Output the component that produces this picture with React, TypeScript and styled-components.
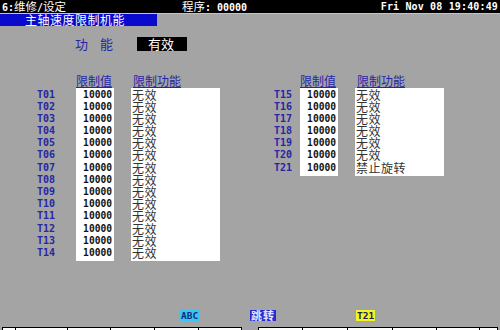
import React from "react";
import styled, { createGlobalStyle } from "styled-components";

const Global = createGlobalStyle`
  html, body { margin: 0; padding: 0; background: #a4a4a4; }
  * { box-sizing: border-box; }
`;

const MONO = `"DejaVu Sans Mono", "Liberation Mono", "Noto Sans CJK SC", monospace`;
const CJK = `"Noto Sans CJK SC", "DejaVu Sans", sans-serif`;
const BLUE_TEXT = "#2626a6";

const Screen = styled.div`
  width: 500px;
  height: 330px;
  background: #a4a4a4;
  display: flex;
  flex-direction: column;
  overflow: hidden;
  position: relative;
`;

const TopBar = styled.div`
  height: 13px;
  background: #000;
  color: #fff;
  font-family: ${MONO};
  font-size: 10px;
  font-weight: bold;
  line-height: 13px;
  display: flex;
  align-items: center;
  padding: 0 2px;
  white-space: nowrap;
  flex-shrink: 0;
`;

const Cjk = styled.span`
  font-family: ${CJK};
  font-size: 11.5px;
  line-height: 12px;
  font-weight: normal;
`;

const ScreenName = styled.span`
  width: 180px;
  line-height: 13px;
`;

const Program = styled.span`
  flex: 1;
  line-height: 13px;
`;

const Clock = styled.span`
  letter-spacing: 0.15px;
`;

const SubBar = styled.div`
  height: 13px;
  display: flex;
  flex-shrink: 0;
  border-top: 1px solid #c4c4c4;
`;

const TitleTab = styled.div`
  width: 157px;
  background: #0a0acc;
  color: #fff;
  font-family: ${CJK};
  font-size: 12px;
  line-height: 12px;
  padding-left: 25px;
  letter-spacing: 0.5px;
  white-space: nowrap;
`;

const FuncRow = styled.div`
  margin-top: 11px;
  height: 14px;
  display: flex;
  align-items: center;
  padding-left: 75px;
  flex-shrink: 0;
`;

const FuncLabel = styled.span`
  font-family: ${CJK};
  font-size: 13px;
  line-height: 14px;
  color: ${BLUE_TEXT};
  width: 62px;
  letter-spacing: 12px;
`;

const StatusBox = styled.span`
  width: 50px;
  height: 14px;
  background: #000;
  color: #fff;
  font-family: ${CJK};
  font-size: 13px;
  line-height: 14px;
  padding-left: 11px;
`;

const Tables = styled.div`
  margin-top: 23px;
  display: flex;
  padding-left: 37px;
  gap: 54px;
  align-items: flex-start;
  flex-shrink: 0;
`;

const Block = styled.div`
  display: flex;
  align-items: flex-start;
`;

const LabelCol = styled.div<{ $w: number }>`
  width: ${(p) => p.$w}px;
  padding-top: 14.5px;
  display: flex;
  flex-direction: column;
`;

const TLabel = styled.div`
  height: 12.2px;
  line-height: 12.2px;
  font-family: ${MONO};
  font-weight: bold;
  font-size: 10px;
  color: ${BLUE_TEXT};
`;

const Column = styled.div<{ $w: number; $ml?: number }>`
  width: ${(p) => p.$w}px;
  margin-left: ${(p) => p.$ml ?? 0}px;
  display: flex;
  flex-direction: column;
`;

const Header = styled.div<{ $indent?: number }>`
  height: 14px;
  line-height: 13px;
  font-family: ${CJK};
  font-size: 12px;
  color: ${BLUE_TEXT};
  text-decoration: underline;
  text-underline-offset: 1px;
  padding-left: ${(p) => p.$indent ?? 0}px;
  white-space: nowrap;
`;

const Box = styled.div`
  background: #fff;
  padding-top: 0.5px;
  padding-bottom: 2px;
  display: flex;
  flex-direction: column;
`;

const Value = styled.div`
  height: 12.2px;
  line-height: 12.2px;
  font-family: ${MONO};
  font-weight: bold;
  font-size: 9.6px;
  color: #111;
  text-align: right;
  padding-right: 2px;
`;

const FuncText = styled.div`
  height: 12.2px;
  line-height: 12.2px;
  font-family: ${CJK};
  font-size: 12px;
  color: #333;
  padding-left: 1px;
  letter-spacing: 0.5px;
  white-space: nowrap;
`;

const Hints = styled.div`
  margin-top: auto;
  height: 11px;
  margin-bottom: 6px;
  display: grid;
  grid-template-columns: 70px 106px auto;
  padding-left: 180px;
  align-items: center;
  flex-shrink: 0;
`;

const toneBg = { cyan: "#3cc4f4", blue: "#2a2ad0", yellow: "#f4f424" } as const;
const toneFg = { cyan: "#10307a", blue: "#e0e8ff", yellow: "#202060" } as const;

const Hint = styled.span<{ $tone: keyof typeof toneBg }>`
  justify-self: start;
  height: 11px;
  line-height: 11px;
  padding: 0 1px;
  background: ${(p) => toneBg[p.$tone]};
  color: ${(p) => toneFg[p.$tone]};
  font-family: ${MONO};
  font-weight: bold;
  font-size: 9.5px;
  overflow: hidden;
`;

const HintCjk = styled.span`
  font-family: ${CJK};
  font-size: 11px;
  line-height: 11px;
  font-weight: bold;
  letter-spacing: 1px;
`;

const Strip = styled.div`
  height: 3px;
  display: flex;
  padding-left: 2px;
  flex-shrink: 0;
`;

const Key = styled.div<{ $w: number; $gap?: number }>`
  width: ${(p) => p.$w}px;
  margin-left: ${(p) => p.$gap ?? 0}px;
  height: 10px;
  background: #fff;
  border: 1px solid #000;
  margin-right: -1px;
`;

const left = Array.from({ length: 14 }, (_, i) => ({
  t: `T${String(i + 1).padStart(2, "0")}`,
  v: "10000",
  f: "无效",
}));
const right = Array.from({ length: 7 }, (_, i) => ({
  t: `T${i + 15}`,
  v: "10000",
  f: i === 6 ? "禁止旋转" : "无效",
}));

type Row = { t: string; v: string; f: string };

function Table({ rows, labelW }: { rows: Row[]; labelW: number }) {
  return (
    <Block>
      <LabelCol $w={labelW}>
        {rows.map((r) => (
          <TLabel key={r.t}>{r.t}</TLabel>
        ))}
      </LabelCol>
      <Column $w={38}>
        <Header>限制值</Header>
        <Box>
          {rows.map((r) => (
            <Value key={r.t}>{r.v}</Value>
          ))}
        </Box>
      </Column>
      <Column $w={89} $ml={17}>
        <Header $indent={2}>限制功能</Header>
        <Box>
          {rows.map((r) => (
            <FuncText key={r.t}>{r.f}</FuncText>
          ))}
        </Box>
      </Column>
    </Block>
  );
}

const keys: { w: number; gap?: number }[] = [
  { w: 14 }, { w: 53 }, { w: 44 }, { w: 45 }, { w: 45 }, { w: 44 },
  { w: 45, gap: 17 }, { w: 46 }, { w: 46 }, { w: 45 }, { w: 44 }, { w: 19 },
];

export default function App() {
  return (
    <Screen>
      <Global />
      <TopBar>
        <ScreenName>
          6:<Cjk>维修</Cjk>/<Cjk>设定</Cjk>
        </ScreenName>
        <Program>
          <Cjk>程序</Cjk>: 00000
        </Program>
        <Clock>Fri Nov 08 19:40:49</Clock>
      </TopBar>
      <SubBar>
        <TitleTab>主轴速度限制机能</TitleTab>
      </SubBar>
      <FuncRow>
        <FuncLabel>功能</FuncLabel>
        <StatusBox>有效</StatusBox>
      </FuncRow>
      <Tables>
        <Table rows={left} labelW={39} />
        <Table rows={right} labelW={26} />
      </Tables>
      <Hints>
        <Hint $tone="cyan">ABC</Hint>
        <Hint $tone="blue">
          <HintCjk>跳转</HintCjk>
        </Hint>
        <Hint $tone="yellow">T21</Hint>
      </Hints>
      <Strip>
        {keys.map((k, i) => (
          <Key key={i} $w={k.w} $gap={k.gap} />
        ))}
      </Strip>
    </Screen>
  );
}
